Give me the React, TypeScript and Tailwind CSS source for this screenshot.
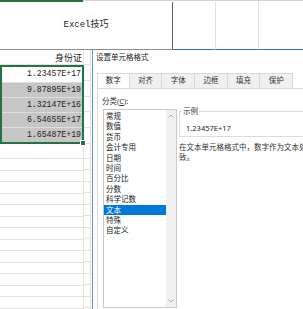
import React from 'react';

const values = ['1.23457E+17', '9.87895E+19', '1.32147E+16', '6.54655E+17', '1.65487E+19'];
const tabs = ['数字', '对齐', '字体', '边框', '填充', '保护'];
const categories = ['常规', '数值', '货币', '会计专用', '日期', '时间', '百分比', '分数', '科学记数', '文本', '特殊', '自定义'];
const emptyRows = Array.from({ length: 15 });

function Chevron({ up }: { up?: boolean }) {
  return (
    <svg width="6" height="4" viewBox="0 0 6 4" className="text-[#a6a6a6]">
      <path d={up ? 'M0.5 3.5 L3 1 L5.5 3.5' : 'M0.5 0.5 L3 3 L5.5 0.5'} fill="none" stroke="currentColor" strokeWidth="1" />
    </svg>
  );
}

function Sheet() {
  return (
    <div className="flex flex-col">
      {/* column header bottom edge */}
      <div className="flex h-[2px]">
        <div className="w-[83px] bg-[#217346]" />
        <div className="flex-1 border-t border-[#d4d4d4]" />
      </div>

      {/* merged title row */}
      <div className="flex h-[48px]">
        <div className="flex w-[173px] items-center justify-center border-r border-b border-r-[#5e5e5e] border-b-[#8e8e8e] font-['Liberation_Mono','Noto_Sans_CJK_SC',monospace] text-[9px] text-[#222]">
          Excel技巧
        </div>
        <div className="w-[43px] border-r border-b border-r-[#e1e1e1] border-b-[#2f74c4]" />
        <div className="w-[43px] border-r border-b border-r-[#e1e1e1] border-b-[#2f74c4]" />
        <div className="flex-1 border-b border-[#2f74c4]" />
      </div>

      <div className="flex">
        {/* column A */}
        <div className="flex w-[84px] flex-col">
          <div className="flex h-[15px] items-center justify-end border-r border-b border-[#e1e1e1] pr-[1px] font-['Noto_Sans_CJK_SC',sans-serif] text-[9px] leading-none text-[#222]">
            身份证
          </div>
          <div className="relative border-2 border-[#217346]">
            {values.map((v, i) => (
              <div
                key={v}
                className={`flex h-[15px] items-center justify-end pr-[1px] font-['Liberation_Mono',monospace] text-[8.2px] text-[#222] ${
                  i === 0 ? 'bg-white' : 'border-t border-[#dedede] bg-[#c6c6c6]'
                }`}
              >
                {v}
              </div>
            ))}
            <div className="absolute -right-[4px] -bottom-[4px] h-[6px] w-[6px] border border-white bg-[#217346]" />
          </div>
          {emptyRows.map((_, i) => (
            <div key={i} className={`${i === 0 ? 'h-[15px]' : 'h-[11.5px]'} border-r border-b border-[#e1e1e1]`} />
          ))}
        </div>

        {/* column B */}
        <div className="flex w-[7px] flex-col">
          <div className="h-[15px] border-r border-b border-[#e1e1e1]" />
          {values.map((v) => (
            <div key={v} className="h-[15.8px] border-r border-b border-[#e1e1e1]" />
          ))}
          {emptyRows.map((_, i) => (
            <div key={i} className={`${i === 0 ? 'h-[15px]' : 'h-[11.5px]'} border-r border-b border-[#e1e1e1]`} />
          ))}
        </div>
      </div>
    </div>
  );
}

function FormatDialog() {
  return (
    <div className="absolute top-[50px] left-[92px] h-[300px] w-[260px] border-l border-[#5f9ad6] bg-white font-['Noto_Sans','Noto_Sans_CJK_SC',sans-serif] text-[7.5px] text-[#333]">
      {/* title */}
      <div className="flex h-[16px] items-center pl-[3px] text-[#222]">设置单元格格式</div>

      {/* tabs */}
      <div className="mt-[7px] ml-[4px] flex h-[16px] border-b border-[#d9d9d9]">
        {tabs.map((t, i) => (
          <div
            key={t}
            className={`flex w-[32.7px] items-center justify-center border-t border-r border-[#d9d9d9] ${
              i === 0 ? 'border-l bg-white text-[#222]' : 'bg-[#f0f0f0]'
            }`}
          >
            {t}
          </div>
        ))}
      </div>

      {/* tab panel */}
      <div className="ml-[4px] flex h-[220px] border-l border-[#d9d9d9]">
        {/* category list */}
        <div className="flex w-[80px] flex-col pl-[4px]">
          <div className="mt-[7px] leading-[10px]">
            分类(<span className="underline">C</span>):
          </div>
          <div className="mt-[3px] ml-[1px] flex h-[199px] w-[74px] border border-[#c9c9c9]">
            <div className="flex flex-1 flex-col pt-[1px]">
              {categories.map((c) => (
                <div
                  key={c}
                  className={`h-[10.4px] pl-[2px] leading-[10.4px] ${c === '文本' ? 'bg-[#0078d7] text-white' : 'text-[#222]'}`}
                >
                  {c}
                </div>
              ))}
            </div>
            <div className="flex w-[10px] flex-col items-center justify-between bg-[#f0f0f0] py-[4px]">
              <Chevron up />
              <Chevron />
            </div>
          </div>
        </div>

        {/* sample and description */}
        <div className="ml-[2px] flex flex-1 flex-col">
          <div className="relative mt-[22px] flex h-[26px] items-end border border-[#dcdcdc] pb-[3px] pl-[6px]">
            <span className="absolute -top-[6px] left-[2px] bg-white px-[1px] leading-[10px]">示例</span>
            <span className="leading-[10px] text-[#222]">1.23457E+17</span>
          </div>
          <div className="mt-[5px] overflow-hidden leading-[10px] whitespace-nowrap">
            在文本单元格格式中，数字作为文本处理。单元格显示的内容与输入的内容完全一
          </div>
          <div className="leading-[10px]">致。</div>
        </div>
      </div>
    </div>
  );
}

export default function App() {
  return (
    <div className="relative h-[309px] w-[303px] overflow-hidden bg-white">
      <Sheet />
      <FormatDialog />
    </div>
  );
}
